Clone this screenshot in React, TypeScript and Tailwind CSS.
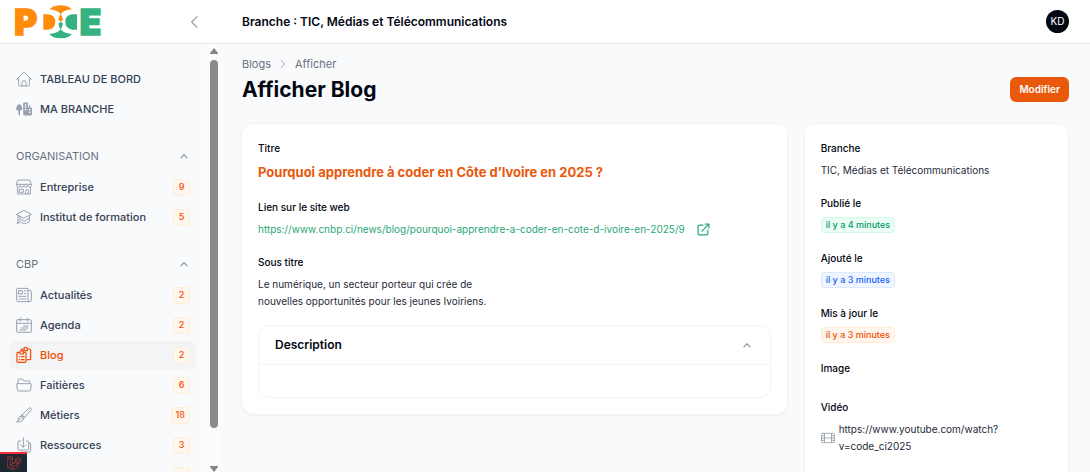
import type { ReactNode } from "react";
import { FaLaravel, FaTreeCity } from "react-icons/fa6";

type NavItem = {
  label?: string;
  icon?: ReactNode;
  count?: number;
  active?: boolean;
};

function Icon({ children, className = "h-4 w-4" }: { children: ReactNode; className?: string }) {
  return (
    <svg
      viewBox="0 0 24 24"
      fill="none"
      stroke="currentColor"
      strokeWidth="1.5"
      strokeLinecap="round"
      strokeLinejoin="round"
      className={className}
      aria-hidden="true"
    >
      {children}
    </svg>
  );
}

const mainItems: NavItem[] = [
  {
    label: "TABLEAU DE BORD",
    icon: (
      <Icon>
        <path d="M1 12.5 11 2.3q1-1 2 0L23 12.5M4 10v11q0 1.5 1.5 1.5h13q1.5 0 1.5-1.5V10M9 22.5V17q0-2.5 3-2.5t3 2.5v5.5" />
      </Icon>
    ),
  },
  { label: "MA BRANCHE", icon: <FaTreeCity className="h-4 w-4" /> },
];

const organisationItems: NavItem[] = [
  {
    label: "Entreprise",
    count: 9,
    icon: (
      <Icon>
        <path d="M3.5 1.5h17L23 8H1zM1 8v1.5a2.75 2.75 0 0 0 5.5 0a2.75 2.75 0 0 0 5.5 0a2.75 2.75 0 0 0 5.5 0a2.75 2.75 0 0 0 5.5 0V8M2.5 12.5v10h19v-10M5.5 15.5h5.5V20H5.5zM14.5 22.5v-5q0-2 2-2t2 2v5" />
      </Icon>
    ),
  },
  {
    label: "Institut de formation",
    count: 5,
    icon: (
      <Icon>
        <path d="M1 8 12 2l11 6-11 5.5zM6 11v8q6 5.5 14 0v-9M3 9.5V19M1.5 22 3 19l1.5 3M8.5 16l4 2.5L20 14" />
      </Icon>
    ),
  },
];

const cbpItems: NavItem[] = [
  {
    label: "Actualités",
    count: 2,
    icon: (
      <Icon>
        <path d="M18 5h3q2 0 2 2v12.5a2.5 2.5 0 0 1-5 0V3.5Q18 2 16.5 2h-14Q1 2 1 3.5V20q0 2 2 2h17M4.5 5.5h5v5h-5zM12.5 6H15M12.5 10H15M4.5 14H15M4.5 18H15" />
      </Icon>
    ),
  },
  {
    label: "Agenda",
    count: 2,
    icon: (
      <Icon>
        <path d="M3 4h18q2 0 2 2v15q0 2-2 2H3q-2 0-2-2V6q0-2 2-2zM1 9.5h22M6.5 1.5v5M17.5 1.5v5M11 13.5h7M8 16.5h10M6 19.5h9" />
      </Icon>
    ),
  },
  {
    label: "Blog",
    count: 2,
    active: true,
    icon: (
      <Icon>
        <path
          d="M8 5V4q0-1 1-1h3a2.500 2.500 0 0 1 5 0h3.500q1.500 0 1.500 1.500v13q0 1.500-1.500 1.500H17M12 3v2.500h5V3M3 8h3a2.500 2.500 0 0 1 5 0h2.500Q15 8 15 9.500v12q0 1.500-1.500 1.500H3q-1.500 0-1.500-1.500v-12Q1.500 8 3 8zM6 8v2.500h5V8M5 14.500h.5M8 14.500h4M5 19h.5M8 19h4"
          strokeWidth="1.800"
        />
      </Icon>
    ),
  },
  {
    label: "Faitières",
    count: 6,
    icon: (
      <Icon>
        <path d="M3 10V4.5Q3 3 4.5 3h5L12 6h7.5Q21 6 21 7.5V10M2 10h20q1.2 0 1 1.5l-1.2 8q-.3 1.5-1.800 1.500H4q-1.500 0-1.800-1.500L1 11.500Q.8 10 2 10z" />
      </Icon>
    ),
  },
  {
    label: "Métiers",
    count: 18,
    icon: (
      <Icon>
        <path d="M9 12 19.5 1.7q1.5-1 2.8.1 1.2 1.4.2 2.8L13 15.5zM9 12q2.5.8 4 3.5M8 13.5q3.5 1.5 3.5 4.5-1.5 4.5-10.5 4.5 2-1.5 2-4 .5-4.5 5-5zM4 20l4.5-3.5" />
      </Icon>
    ),
  },
  {
    label: "Ressources",
    count: 3,
    icon: (
      <Icon>
        <path d="M11 1v14M7 11.5l4 4 4-4M7 6H4.5Q3 6 3 7.5V18q0 1.5 1.5 1.5h13Q19 19.5 19 18V7.5Q19 6 17.5 6H15M19 9h1.5Q22 9 22 10.5V20q0 2.5-2.5 2.5H7" />
      </Icon>
    ),
  },
  // placeholder row, only its counter frame is drawn
  {},
];

const badgeTones = {
  green: "border-emerald-100 bg-emerald-50 text-emerald-600",
  blue: "border-blue-100 bg-blue-50 text-blue-600",
  orange: "border-orange-100 bg-orange-50 text-orange-600",
};

function ChevronUp() {
  return (
    <Icon className="h-3 w-3 text-gray-400">
      <path d="m6 15.5 6-6 6 6" strokeWidth="2.5" />
    </Icon>
  );
}

function Logo() {
  return (
    <svg viewBox="0 0 270 102" className="h-[34px] w-[90px] overflow-visible" role="img" aria-label="PDCE">
      <g fontFamily="Inter, sans-serif" fontSize="105" fontWeight="900" strokeWidth="5">
        <text x="1" y="90" fill="#ff8c0a" stroke="#ff8c0a">P</text>
        <text x="197" y="90" fill="#35b27f" stroke="#35b27f">E</text>
      </g>
      {/* two-tone oval crossed by the D and the C */}
      <path d="M102 20Q112 1 140 1t38 19L140 50z" fill="#ff8c0a" />
      <path d="M102 80q10 20 38 20t38-20L140 50z" fill="#35b27f" />
      <path d="M87 13h20q40 4 40 37t-40 37H87zM193 13h-20q-40 4-40 37t40 37h20z" fill="#fff" />
      <path d="M88 28h14q22 2 22 22t-22 24H88z" fill="#ff8c0a" />
      <path d="M189 28h-14q-21 2-21 22t21 24h14z" fill="#35b27f" />
    </svg>
  );
}

function NavList({ items }: { items: NavItem[] }) {
  return (
    <ul className="flex flex-col gap-[2px]">
      {items.map((item, index) => (
        <li key={index}>
          <a
            href="#"
            className={
              item.active
                ? "flex h-7 items-center rounded-md bg-gray-100 px-1.5 text-orange-600"
                : "flex h-7 items-center rounded-md px-1.5 text-gray-400"
            }
          >
            {item.icon}
            <span
              className={
                item.active
                  ? "ml-2 flex-1 text-[11px] font-medium text-orange-600"
                  : "ml-2 flex-1 text-[11px] font-medium text-gray-700"
              }
            >
              {item.label}
            </span>
            {(item.count !== undefined || !item.label) && (
              <span className="flex h-[17px] min-w-[17px] items-center justify-center rounded border border-orange-100 bg-orange-50 px-1 text-[9px] font-medium text-orange-600">
                {item.count}
              </span>
            )}
          </a>
        </li>
      ))}
    </ul>
  );
}

function NavGroup({ title, items }: { title: string; items: NavItem[] }) {
  return (
    <section className="flex flex-col gap-[7px]">
      <button type="button" className="flex h-5 items-center justify-between px-1.5">
        <span className="text-[11px] text-gray-500">{title}</span>
        <ChevronUp />
      </button>
      <NavList items={items} />
    </section>
  );
}

function Entry({ label, children }: { label: string; children?: ReactNode }) {
  return (
    <div>
      <dt className="text-[10px] leading-4 font-medium text-gray-950">{label}</dt>
      <dd className="mt-1.5 text-[10px] leading-4 text-gray-800">{children}</dd>
    </div>
  );
}

function Badge({ tone, children }: { tone: keyof typeof badgeTones; children: ReactNode }) {
  return (
    <span
      className={`flex h-4 w-fit items-center rounded border px-1 text-[9px] font-medium ${badgeTones[tone]}`}
    >
      {children}
    </span>
  );
}

export default function App() {
  return (
    <div className="flex h-screen flex-col overflow-hidden bg-[#f9fafc] font-['Inter',sans-serif] text-gray-950">
      <header className="flex h-11 shrink-0 items-center border-b border-gray-200 bg-white">
        <div className="flex w-[220px] shrink-0 items-center justify-between pl-[14px] pr-[17px]">
          <a href="#">
            <Logo />
          </a>
          <button type="button" aria-label="Réduire le menu" className="text-gray-400">
            <Icon>
              <path d="m15 4-8 8 8 8" strokeWidth="1.8" />
            </Icon>
          </button>
        </div>
        <div className="flex flex-1 items-center justify-between pr-[21px] pl-[22px]">
          <p className="text-xs font-semibold">Branche : TIC, Médias et Télécommunications</p>
          <button type="button" className="h-[23px] w-[23px] rounded-full bg-gray-950 text-[10px] text-white">
            KD
          </button>
        </div>
      </header>

      <div className="flex min-h-0 flex-1">
        <aside className="flex w-[220px] shrink-0">
          <nav className="flex flex-1 flex-col gap-[23px] overflow-hidden pt-[21px] pr-[11px] pl-[10px]">
            <NavList items={mainItems} />
            <NavGroup title="ORGANISATION" items={organisationItems} />
            <NavGroup title="CBP" items={cbpItems} />
          </nav>
          <div className="flex w-[13px] flex-col items-center bg-[#fcfcfc] text-[#858585]">
            <svg viewBox="0 0 8 6" className="mt-1 mb-1.5 h-1.5 w-2" fill="currentColor">
              <path d="M4 0 8 5v1H0V5z" />
            </svg>
            <div className="h-[86%] w-2 rounded-full bg-[#8b8b8b]" />
            <svg viewBox="0 0 8 6" className="mt-auto h-1.5 w-2" fill="currentColor">
              <path d="M4 6 8 1V0H0v1z" />
            </svg>
          </div>
        </aside>

        <main className="flex-1 overflow-hidden px-[21px] pt-3">
          <div className="flex items-end justify-between pl-px">
            <div>
              <nav className="flex items-center gap-[7px] text-[11px] leading-4 text-gray-500">
                <a href="#">Blogs</a>
                <Icon className="h-2.5 w-2.5 text-gray-400">
                  <path d="m8 4 8 8-8 8" strokeWidth="2.4" />
                </Icon>
                <a href="#">Afficher</a>
              </nav>
              <h1 className="mt-1 text-[21px] leading-7 font-bold">Afficher Blog</h1>
            </div>
            <button
              type="button"
              className="mb-[2px] h-[25px] rounded-md bg-[#ea580c] px-[9px] text-[10px] font-semibold text-white"
            >
              Modifier
            </button>
          </div>

          <div className="mt-[19px] grid grid-cols-3 items-start gap-4">
            <section className="col-span-2 rounded-xl border border-gray-100 bg-white p-4 shadow-xs">
              <dl className="flex flex-col gap-[17px]">
                <div>
                  <dt className="text-[10px] leading-4 font-medium">Titre</dt>
                  <dd className="mt-1.5 text-[13px] leading-5 font-bold text-[#ea580c]">
                    Pourquoi apprendre à coder en Côte d’Ivoire en 2025 ?
                  </dd>
                </div>
                <Entry label="Lien sur le site web">
                  <a href="#" className="flex items-center gap-3 text-[#2aa876]">
                    https://www.cnbp.ci/news/blog/pourquoi-apprendre-a-coder-en-cote-d-ivoire-en-2025/9
                    <Icon className="h-[13px] w-[13px]">
                      <path
                        d="M11 4H4Q2 4 2 6v14q0 2 2 2h14q2 0 2-2v-7M15 2h7v7M22 2 9 15"
                        strokeWidth="2.2"
                      />
                    </Icon>
                  </a>
                </Entry>
                <Entry label="Sous titre">
                  <p className="max-w-[240px] leading-[17px]">
                    Le numérique, un secteur porteur qui crée de nouvelles opportunités pour les jeunes
                    Ivoiriens.
                  </p>
                </Entry>
              </dl>
              <section className="mt-[15px] rounded-xl border border-gray-100">
                <button
                  type="button"
                  className="flex w-full items-center justify-between px-4 py-[11px] pr-[17px]"
                >
                  <span className="text-xs leading-4 font-semibold">Description</span>
                  <ChevronUp />
                </button>
                <div className="h-[33px] border-t border-gray-100" />
              </section>
            </section>

            <section className="rounded-xl border border-gray-100 bg-white p-4 pb-8 shadow-xs">
              <dl className="flex flex-col gap-[17px]">
                <Entry label="Branche">TIC, Médias et Télécommunications</Entry>
                <Entry label="Publié le">
                  <Badge tone="green">il y a 4 minutes</Badge>
                </Entry>
                <Entry label="Ajouté le">
                  <Badge tone="blue">il y a 3 minutes</Badge>
                </Entry>
                <Entry label="Mis à jour le">
                  <Badge tone="orange">il y a 3 minutes</Badge>
                </Entry>
                <Entry label="Image" />
                <Entry label="Vidéo">
                  <div className="flex items-center gap-1">
                    <Icon className="h-[14px] w-[14px] shrink-0 text-gray-400">
                      <path d="M3 4h18q2 0 2 1.5v13q0 1.5-2 1.5H3q-2 0-2-1.5v-13Q1 4 3 4zM6 4v16M18 4v16M6 12h12M1 8h5M1 12h5M1 16h5M18 8h5M18 12h5M18 16h5" />
                    </Icon>
                    <span className="leading-[17px]">
                      https://www.youtube.com/watch?
                      <br />
                      v=code_ci2025
                    </span>
                  </div>
                </Entry>
              </dl>
            </section>
          </div>
        </main>
      </div>

      {/* collapsed debug bar, pinned over the sidebar */}
      <button
        type="button"
        aria-label="Debugbar"
        className="fixed bottom-0 left-0 flex h-[20px] w-[27px] items-center justify-center border-t-2 border-red-500 bg-[#1f2733] text-[#e0402f]"
      >
        <FaLaravel className="h-[14px] w-[14px]" />
      </button>
    </div>
  );
}
